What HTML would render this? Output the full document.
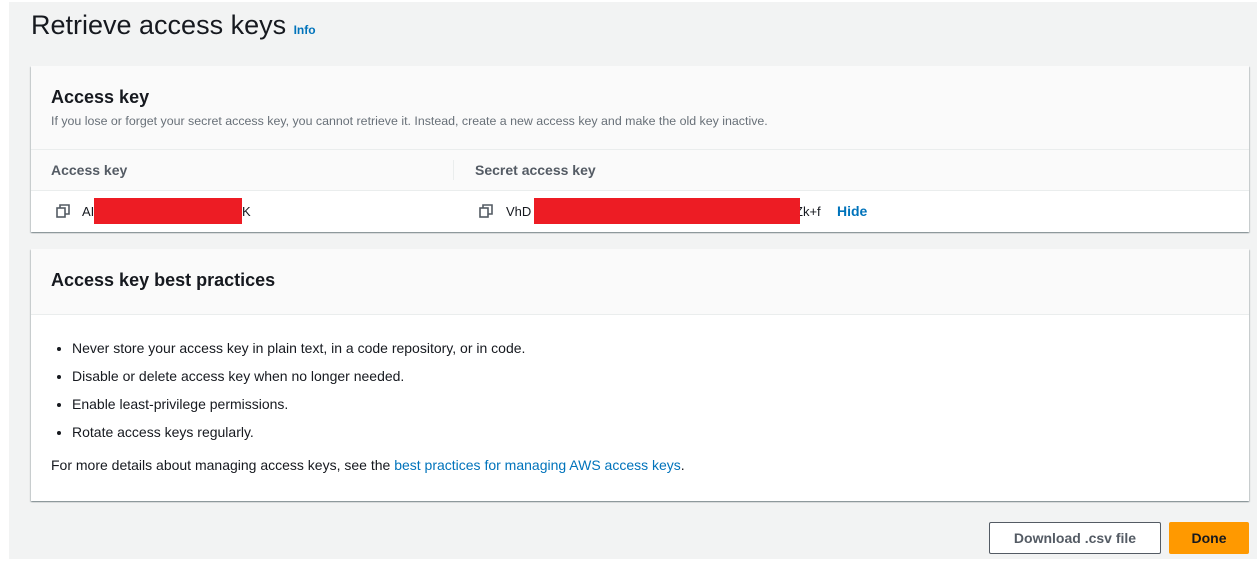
<!DOCTYPE html>
<html><head><style>
body{margin:0;width:1259px;height:561px;background:#fff;font-family:"Liberation Sans",sans-serif;color:#16191f;position:relative;overflow:hidden}
.bg{position:absolute;left:9px;top:2px;width:1248px;height:557px;background:#f2f3f3}
.card{position:absolute;left:31px;width:1218px;background:#fff;box-shadow:0 1px 1px rgba(0,28,36,.3),1px 1px 1px rgba(0,28,36,.15),-1px 1px 1px rgba(0,28,36,.15)}
.abs{position:absolute}
.red{position:absolute;background:#ed1c24}
a{color:#0073bb;text-decoration:none}
ul{margin:0;padding:0 0 0 20px}
li{height:28px;font-size:14px}
</style></head><body>
<div class="bg"></div>
<div class="abs" style="left:31px;top:10px;font-size:27px;color:#16191f">Retrieve access keys <span style="font-size:12px;font-weight:bold;color:#0073bb">Info</span></div>
<div class="card" style="top:66px;height:166px">
 <div class="abs" style="left:0;top:0;width:1218px;height:83px;background:#fafafa;border-bottom:1px solid #eaeded"></div>
 <div class="abs" style="left:20px;top:21px;font-size:18px;font-weight:bold">Access key</div>
 <div class="abs" style="left:20px;top:48px;font-size:12.4px;color:#687078">If you lose or forget your secret access key, you cannot retrieve it. Instead, create a new access key and make the old key inactive.</div>
 <div class="abs" style="left:0;top:84px;width:1218px;height:40px;background:#fafafa;border-bottom:1px solid #eaeded"></div>
 <div class="abs" style="left:20px;top:96px;font-size:14px;font-weight:bold;color:#545b64">Access key</div>
 <div class="abs" style="left:422px;top:94px;width:1px;height:20px;background:#eaeded"></div>
 <div class="abs" style="left:444px;top:96px;font-size:14px;font-weight:bold;color:#545b64">Secret access key</div>
 <svg class="abs" style="left:25px;top:138px" width="14" height="14" viewBox="0 0 14 14" fill="none" stroke="#545b64" stroke-width="1.6"><rect x="1" y="4" width="8" height="9"/><path d="M4 4V1h9v9h-4"/></svg>
 <div class="abs" style="left:51px;top:138px;font-size:13px;color:#16191f">AI</div>
 <div class="abs" style="left:211px;top:138px;font-size:13px">K</div>
 <svg class="abs" style="left:448px;top:138px" width="14" height="14" viewBox="0 0 14 14" fill="none" stroke="#545b64" stroke-width="1.6"><rect x="1" y="4" width="8" height="9"/><path d="M4 4V1h9v9h-4"/></svg>
 <div class="abs" style="left:475px;top:138px;font-size:13px">VhD</div>
 <div class="abs" style="left:764px;top:138px;font-size:13px">Zk+f</div>
 <div class="abs" style="left:806px;top:137px;font-size:14px;font-weight:bold;color:#0073bb">Hide</div>
</div>
<div class="red" style="left:94px;top:198px;width:148px;height:26px"></div>
<div class="red" style="left:534px;top:198px;width:266px;height:26px"></div>
<div class="card" style="top:249px;height:252px">
 <div class="abs" style="left:0;top:0;width:1218px;height:65px;background:#fafafa;border-bottom:1px solid #eaeded"></div>
 <div class="abs" style="left:20px;top:21px;font-size:18px;font-weight:bold">Access key best practices</div>
 <div class="abs" style="left:21px;top:91px">
 <ul><li>Never store your access key in plain text, in a code repository, or in code.</li>
 <li>Disable or delete access key when no longer needed.</li>
 <li>Enable least-privilege permissions.</li>
 <li>Rotate access keys regularly.</li></ul></div>
 <div class="abs" style="left:20px;top:208px;font-size:14px">For more details about managing access keys, see the <a>best practices for managing AWS access keys</a>.</div>
</div>
<div class="abs" style="left:989px;top:522px;width:172px;height:32px;border:1px solid #545b64;border-radius:2px;background:#fff;box-sizing:border-box;text-align:center;line-height:30px;font-size:14px;font-weight:bold;color:#545b64">Download .csv file</div>
<div class="abs" style="left:1169px;top:522px;width:80px;height:32px;background:#ff9900;border-radius:2px;text-align:center;line-height:32px;font-size:14px;font-weight:bold;color:#16191f">Done</div>
</body></html>
